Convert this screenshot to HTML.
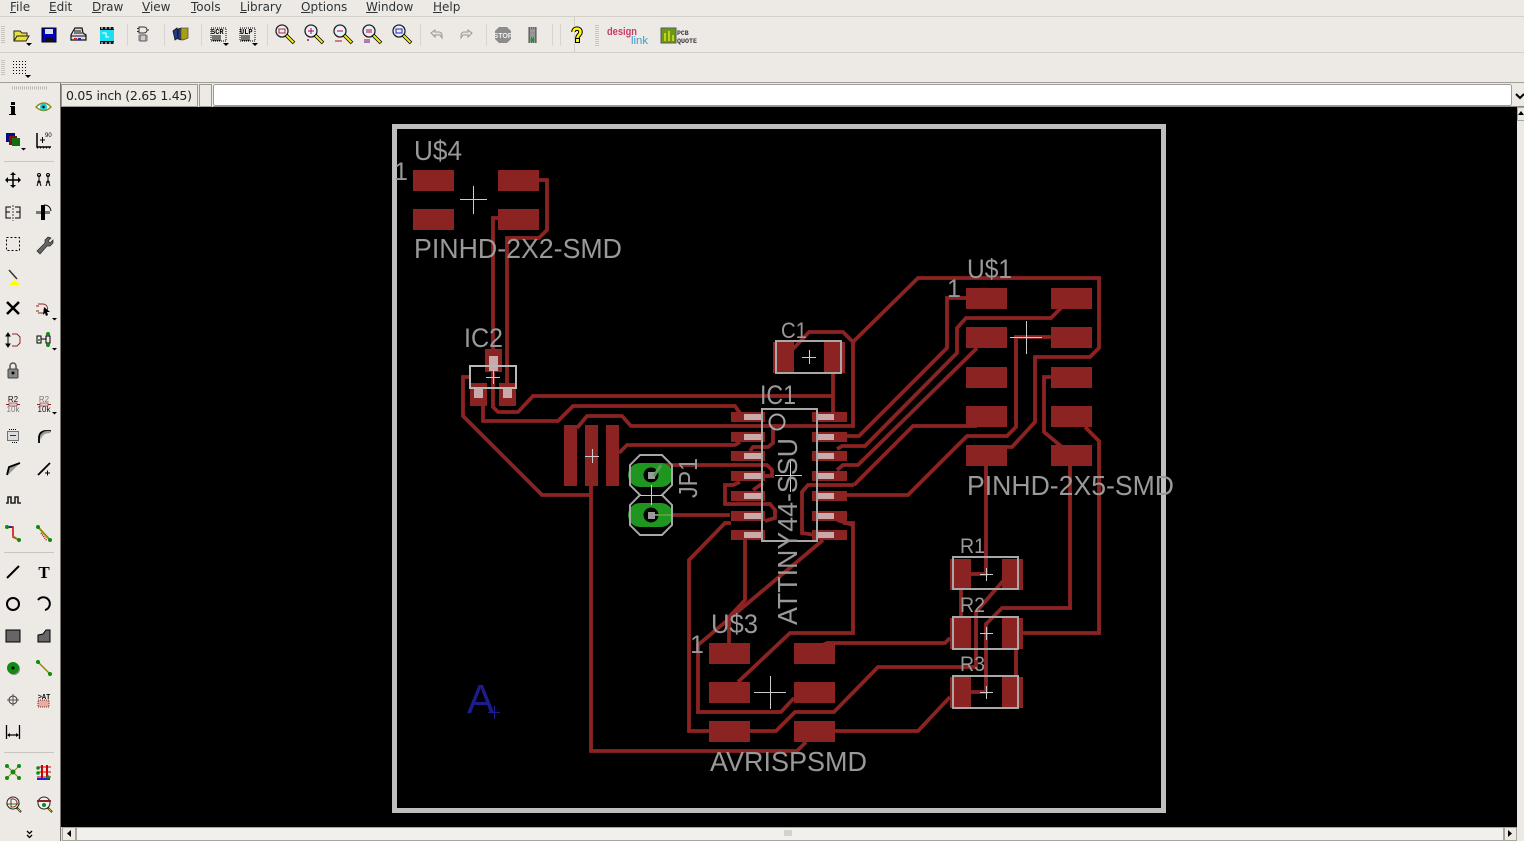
<!DOCTYPE html>
<html><head><meta charset="utf-8"><title>EAGLE Board</title>
<style>
html,body{margin:0;padding:0;width:1524px;height:841px;overflow:hidden;background:#edeae6}
svg{position:absolute;left:0;top:0;display:block}
.m{position:absolute;top:-1px;font:12px/16px "DejaVu Sans","Liberation Sans",sans-serif;color:#2e3436;white-space:nowrap}
.l{font-family:"Liberation Sans",sans-serif;fill:#999}
.t{fill:none;stroke:#8c2323;stroke-width:3.8;stroke-linejoin:miter}
.p{fill:#8c2323}
.g{fill:#c9aaaa}
.x{stroke:#cccccc;stroke-width:1;fill:none}
.o{fill:none;stroke:#a8a8a8;stroke-width:2}
.k{fill:none;stroke:#000;stroke-width:2}
.i{font-family:"Liberation Mono",monospace;font-weight:bold}
</style></head><body>
<svg width="1524" height="841" viewBox="0 0 1524 841" xmlns="http://www.w3.org/2000/svg">
<defs>
<g id="mag"><circle cx="-3" cy="-3" r="6" fill="#e8f0f8" stroke="#222" stroke-width="1.3"/><path d="M1 1L9 9" stroke="#000" stroke-width="3.6"/><path d="M1.500 1.500L8.500 8.500" stroke="#f0e820" stroke-width="2"/></g>
</defs>
<!-- chrome lines -->
<rect x="0" y="16" width="1524" height="1" fill="#d3cfc9"/>
<rect x="0" y="52" width="1524" height="1" fill="#d3cfc9"/>
<rect x="0" y="82" width="1524" height="1" fill="#cfcbc5"/>
<rect x="574" y="17" width="1" height="35" fill="#d3cfc9"/>
<!-- toolbar separators -->
<g fill="#d8d5d0"><rect x="127" y="24" width="1" height="22"/><rect x="164" y="24" width="1" height="22"/><rect x="201" y="24" width="1" height="22"/><rect x="267" y="24" width="1" height="22"/><rect x="420" y="24" width="1" height="22"/><rect x="486" y="24" width="1" height="22"/><rect x="552" y="24" width="1" height="22"/><rect x="560" y="24" width="1" height="22"/></g>
<g fill="#c8c5c0"><path d="M1 26h4v1H1zM1 28h4v1H1zM1 30h4v1H1zM1 32h4v1H1zM1 34h4v1H1zM1 36h4v1H1zM1 38h4v1H1zM1 40h4v1H1zM1 42h4v1H1zM1 60h4v1H1zM1 62h4v1H1zM1 64h4v1H1zM1 66h4v1H1zM1 68h4v1H1zM1 70h4v1H1zM1 72h4v1H1zM1 74h4v1H1zM595 25h4v1h-4zM595 27h4v1h-4zM595 29h4v1h-4zM595 31h4v1h-4zM595 33h4v1h-4zM595 35h4v1h-4zM595 37h4v1h-4zM595 39h4v1h-4zM595 41h4v1h-4zM595 43h4v1h-4zM595 45h4v1h-4z"/></g>
<!-- toolbar icons -->
<path d="M14 31h6l2 2h5v3h2l-3 5H14z" fill="#e8e040" stroke="#222" stroke-width="1"/><path d="M14 41l3-5h12" fill="none" stroke="#222"/>
<path d="M26 43h6l-3 3z" fill="#000"/>
<rect x="42" y="28" width="14" height="14" fill="#0000c0" stroke="#000"/><rect x="45" y="29" width="8" height="5" fill="#e0e0e0"/><rect x="45" y="37" width="8" height="5" fill="#111"/>
<path d="M72 33l3-5h7l1 5 3 2v5H71v-5z" fill="#ddd" stroke="#111" stroke-width="1.200"/><path d="M71 36h15M74 31h7M74 33h8" stroke="#111"/><path d="M74 39h3" stroke="#d02020" stroke-width="2"/><path d="M78 39h3" stroke="#2020d0" stroke-width="2"/>
<rect x="100" y="27" width="14" height="17" fill="#111"/><rect x="100" y="30" width="14" height="11" fill="#18e0f0"/><path d="M101 28h2m2 0h2m2 0h2m2 0h1M101 43h2m2 0h2m2 0h2m2 0h1" stroke="#fff"/><path d="M102 33h4v4h3" stroke="#fff" fill="none"/>
<path d="M139 27h5a3 3 0 0 1 0 6h-5zM137 28.500h2M137 31.500h2M147 30h2" fill="none" stroke="#333"/><rect x="140" y="35" width="6" height="6" fill="#ccc" stroke="#555"/><path d="M138 36h2m-2 2h2m-2 2h2m6-4h2m-2 2h2m-2 2h2" stroke="#777"/>
<path d="M173 31l4-3 1 10-3 2z" fill="#243c86" stroke="#111" stroke-width=".8"/><path d="M178 29l3-1v12l-3-1z" fill="#243c86" stroke="#111" stroke-width=".8"/><path d="M181 28h7v10l-5 2-2-1z" fill="#a8a010" stroke="#554" stroke-width=".8"/>
<g stroke="#000" stroke-dasharray="1 1" fill="none"><path d="M211 28h15v13h-15z"/></g><text x="211" y="34" class="i" font-size="7" fill="#000">SCR</text><path d="M212 36h9M212 38h9M212 40h9" stroke="#000"/><path d="M223 43h6l-3 3z"/>
<g stroke="#000" stroke-dasharray="1 1" fill="none"><path d="M240 28h15v13h-15z"/></g><text x="240" y="34" class="i" font-size="7" fill="#000">ULP</text><path d="M241 36h9M241 38h9M241 40h9" stroke="#000"/><path d="M252 43h6l-3 3z"/>
<use href="#mag" transform="translate(285,34)"/><path d="M279 29h6v4h-6z" fill="none" stroke="#c02030" stroke-width="1"/>
<use href="#mag" transform="translate(314,34)"/><path d="M308 31h6M311 28v6" stroke="#c00050"/><path d="M307 40h2M308 39v2" stroke="#c00050"/>
<use href="#mag" transform="translate(343,34)"/><path d="M337 31h6M335 41h7" stroke="#c00030"/>
<use href="#mag" transform="translate(372,34)"/><path d="M366 30h6M366 32h6" stroke="#c00050"/><path d="M364 40h6" stroke="#c00030"/><path d="M364 42h6" stroke="#2020c0"/>
<use href="#mag" transform="translate(402,34)"/><path d="M396 29h6v4h-6z" fill="none" stroke="#2020c0"/>
<path d="M431 33l4-3v2h4a3 3 0 0 1 3 3v3l-2-3h-5v2z" fill="#e6e4e0" stroke="#9a9894"/>
<path d="M472 33l-4-3v2h-4a3 3 0 0 0-3 3v3l2-3h5v2z" fill="#e6e4e0" stroke="#9a9894"/>
<path d="M499 27h8l4 4v8l-4 4h-8l-4-4v-8z" fill="#8c8c8c"/><text x="503" y="38" text-anchor="middle" font-family="Liberation Sans,sans-serif" font-weight="bold" font-size="7" fill="#eee">STOP</text>
<rect x="528" y="27" width="9" height="16" fill="#666"/><path d="M528 28h9M528 30h9M528 32h9M528 34h9M528 36h9M528 38h9M528 40h9M528 42h9" stroke="#cfcfcf" stroke-dasharray="1 1"/><circle cx="532.500" cy="31" r="2" fill="#999"/><circle cx="532.500" cy="35" r="2" fill="#999"/><circle cx="532.500" cy="40" r="2" fill="#1a9a3a"/>
<path d="M573.500 32c0-4.500 7-4.500 7 0 0 3-3 3-3 6" fill="none" stroke="#000" stroke-width="4.500"/><rect x="575" y="38" width="5" height="5" fill="#000"/>
<path d="M573.500 32c0-4.500 7-4.500 7 0 0 3-3 3-3 6" fill="none" stroke="#ff0" stroke-width="2.500"/><rect x="576" y="39" width="3" height="3" fill="#ff0"/>
<text x="607" y="35" font-family="Liberation Sans,sans-serif" font-size="11" font-weight="bold" fill="#c83a64" textLength="30" lengthAdjust="spacingAndGlyphs">design</text>
<text x="631" y="44" font-family="Liberation Sans,sans-serif" font-size="11" fill="#3a9ac8" textLength="17" lengthAdjust="spacingAndGlyphs">link</text>
<rect x="661" y="28" width="15" height="15" fill="#6a9a10" stroke="#556"/><path d="M665 41v-8M669 41v-10M673 41v-6" stroke="#e8e020" stroke-width="1.500"/>
<text x="677" y="35" class="i" font-size="6.500" fill="#333">PCB</text><text x="677" y="43" class="i" font-size="6.500" fill="#333" textLength="20" lengthAdjust="spacingAndGlyphs">QUOTE</text>
<!-- grid icon -->
<g fill="#000"><path d="M13 61h1v1h-1zM16 61h1v1h-1zM19 61h1v1h-1zM22 61h1v1h-1zM25 61h1v1h-1zM13 64h1v1h-1zM16 64h1v1h-1zM19 64h1v1h-1zM22 64h1v1h-1zM25 64h1v1h-1zM13 67h1v1h-1zM16 67h1v1h-1zM19 67h1v1h-1zM22 67h1v1h-1zM25 67h1v1h-1zM13 70h1v1h-1zM16 70h1v1h-1zM19 70h1v1h-1zM22 70h1v1h-1zM25 70h1v1h-1zM13 73h1v1h-1zM16 73h1v1h-1zM19 73h1v1h-1zM22 73h1v1h-1zM25 73h1v1h-1z"/><path d="M25 75h6l-3 3z"/></g>
<!-- status row -->
<rect x="61.500" y="84.500" width="136" height="22" fill="#edeae6" stroke="#9b9791"/>
<text x="66" y="100" font-family="DejaVu Sans,sans-serif" font-size="12.500" fill="#222" textLength="126">0.05 inch (2.65 1.45)</text>
<rect x="199.500" y="84.500" width="12" height="22" fill="#edeae6" stroke="#9b9791"/>
<rect x="213.500" y="84.500" width="1298" height="21" rx="2" fill="#fff" stroke="#a09c96"/>
<rect x="1512" y="84" width="12" height="22" fill="#edeae6"/>
<path d="M1516 94l4 4 4-4" fill="none" stroke="#000" stroke-width="2"/>
<rect x="0" y="82" width="1524" height="1" fill="#8d8984" opacity=".7"/>
<rect x="213" y="106" width="1311" height="1" fill="#8d8984"/>
<!-- canvas -->
<rect x="61" y="107" width="1456" height="720" fill="#000"/>
<rect x="60" y="83" width="1" height="758" fill="#77736e"/>
<!-- scrollbars -->
<rect x="61" y="827" width="1463" height="14" fill="#e4e1dc"/>
<rect x="62.500" y="827.500" width="13" height="13" fill="#edeae6" stroke="#a8a49e"/>
<path d="M71 830v7l-4-3.500z" fill="#000"/>
<rect x="76.500" y="827.500" width="1427" height="13" fill="#f2f0ec" stroke="#a8a49e"/>
<rect x="1504.500" y="827.500" width="12" height="13" fill="#edeae6" stroke="#a8a49e"/>
<path d="M1508 830v7l4-3.500z" fill="#000"/>
<path d="M785 830v6M787 830v6M789 830v6M791 830v6" stroke="#b8b4ae"/>
<rect x="1517" y="107" width="7" height="734" fill="#edeae6"/>
<path d="M1517.500 107.500h7M1517.500 107.500v13h7" fill="none" stroke="#a8a49e"/>
<path d="M1521 111l-3 4h6z" fill="#000"/>
<!-- traces -->
<g class="t">
<path d="M539 180h8v50l-8 8h-32v145"/>
<path d="M498 218h-5v131"/>
<path d="M493 372v35l5 5h20l15-16h300"/>
<path d="M833 373v39"/>
<path d="M483 406v15h75l15-15h162l7 10"/>
<path d="M469 377h-6v39l79 79h49"/>
<path d="M591 486v265h206l9-9"/>
<path d="M577 428l10-12h35l9 10h222v-84l-10-10h-34l-16 17"/>
<path d="M853 342l65-64h181v70l-9 9h-55v65l-23 25h-15"/>
<path d="M619 453l8-8h108l5-3"/>
<path d="M660 465h107l5 5v6h-12"/>
<path d="M773 426v17l-5 4h-15l-3 4"/>
<path d="M740 482l-7 3h-8v19h45l5 6v8l-10 3"/>
<path d="M753 490l10-7"/>
<path d="M651 515h79"/>
<path d="M731 523h-6l-36 37v171h20"/>
<path d="M745 540v60l-16 17v26"/>
<path d="M823 540L698 645v67h83l13-14"/>
<path d="M843 523h10v110h-63l-52 49"/>
<path d="M847 436h12l88-88v-50h19"/>
<path d="M837 449l5-3h23l92-93v-25l9-10h85l11-11"/>
<path d="M837 470l6-5h15l119-117"/>
<path d="M854 485l59-59h64"/>
<path d="M854 485h-46l-6 7v41l13 2"/>
<path d="M847 495h61l59-59h40l9-9v-90h35"/>
<path d="M837 520l16 5"/>
<path d="M1051 377h-7v55l18 15"/>
<path d="M1085 427l14 14v192h-76"/>
<path d="M1070 466v142h-68l-16 16v68h-15"/>
<path d="M986 466v108h-15"/>
<path d="M961 590v28"/>
<path d="M1003 581l-27 31v55h-98l-44 45h-39l-19 19h-26"/>
<path d="M1016 649v28"/>
<path d="M950 638l-5 5H827l-4 2"/>
<path d="M950 697l-32 34h-83"/>
</g>
<!-- pads -->
<g class="p">
<rect x="413" y="170" width="41" height="21"/><rect x="498" y="170" width="41" height="21"/><rect x="413" y="209" width="41" height="21"/><rect x="498" y="209" width="41" height="21"/>
<rect x="485" y="349" width="17" height="23"/><rect x="470" y="383" width="17" height="23"/><rect x="499" y="383" width="17" height="23"/>
<rect x="564" y="425" width="13" height="61"/><rect x="585" y="425" width="13" height="61"/><rect x="606" y="425" width="13" height="61"/>
<rect x="773" y="342" width="21" height="31"/><rect x="824" y="342" width="21" height="31"/>
<rect x="731" y="412" width="34" height="10"/><rect x="731" y="432" width="34" height="10"/><rect x="731" y="451" width="34" height="10"/><rect x="731" y="471" width="34" height="10"/><rect x="731" y="491" width="34" height="10"/><rect x="731" y="511" width="34" height="10"/><rect x="731" y="530" width="34" height="10"/>
<rect x="812" y="412" width="35" height="10"/><rect x="812" y="432" width="35" height="10"/><rect x="812" y="451" width="35" height="10"/><rect x="812" y="471" width="35" height="10"/><rect x="812" y="491" width="35" height="10"/><rect x="812" y="511" width="35" height="10"/><rect x="812" y="530" width="35" height="10"/>
<rect x="966" y="288" width="41" height="21"/><rect x="1051" y="288" width="41" height="21"/><rect x="966" y="327" width="41" height="21"/><rect x="1051" y="327" width="41" height="21"/><rect x="966" y="367" width="41" height="21"/><rect x="1051" y="367" width="41" height="21"/><rect x="966" y="406" width="41" height="21"/><rect x="1051" y="406" width="41" height="21"/><rect x="966" y="445" width="41" height="21"/><rect x="1051" y="445" width="41" height="21"/>
<rect x="709" y="643" width="41" height="21"/><rect x="794" y="643" width="41" height="21"/><rect x="709" y="682" width="41" height="21"/><rect x="794" y="682" width="41" height="21"/><rect x="709" y="721" width="41" height="21"/><rect x="794" y="721" width="41" height="21"/>
<rect x="950" y="559" width="21" height="31"/><rect x="1002" y="559" width="21" height="31"/><rect x="950" y="618" width="21" height="31"/><rect x="1002" y="618" width="21" height="31"/><rect x="950" y="677" width="21" height="31"/><rect x="1002" y="677" width="21" height="31"/>
</g>
<!-- light pad overlays -->
<g class="g">
<rect x="489" y="356" width="9" height="15"/><rect x="474" y="387" width="9" height="11"/><rect x="503" y="387" width="9" height="11"/>
<rect x="744" y="414" width="18" height="6"/><rect x="744" y="434" width="18" height="6"/><rect x="744" y="453" width="18" height="6"/><rect x="744" y="473" width="18" height="6"/><rect x="744" y="493" width="18" height="6"/><rect x="744" y="513" width="18" height="6"/><rect x="744" y="532" width="18" height="6"/>
<rect x="817" y="414" width="17" height="6"/><rect x="817" y="434" width="17" height="6"/><rect x="817" y="453" width="17" height="6"/><rect x="817" y="473" width="17" height="6"/><rect x="817" y="493" width="17" height="6"/><rect x="817" y="513" width="17" height="6"/><rect x="817" y="532" width="17" height="6"/>
</g>
<!-- JP1 -->
<g fill="#1f961f"><rect x="628" y="463" width="45" height="24" rx="12"/><rect x="628" y="503" width="45" height="24" rx="12"/></g>
<circle cx="651" cy="475" r="7.500" fill="#000"/><circle cx="651" cy="515" r="7.500" fill="#000"/>
<rect x="648" y="472" width="7" height="7" fill="#9a9a9a"/><rect x="648" y="512" width="7" height="7" fill="#9a9a9a"/>
<path d="M654 476l7-11" stroke="#5e9a5e" stroke-width="3" fill="none"/>
<path d="M655 515h18" stroke="#5e9a3a" stroke-width="2" fill="none"/>
<path d="M640 455h22l10 10v20l-10 10 10 10v20l-10 10h-22l-10-10v-20l10-10-10-10v-20z" fill="none" stroke="#a8a8a8" stroke-width="2"/>
<!-- outlines -->
<rect x="394.500" y="126.500" width="769" height="684" fill="none" stroke="#bebebe" stroke-width="5"/>
<rect x="470" y="366" width="46" height="22" class="o" stroke-width="2.500" style="stroke:#b8b8b8"/>
<rect x="776" y="341" width="65" height="32" class="o"/>
<rect x="762" y="409" width="55" height="132" class="o"/>
<circle cx="777" cy="422" r="7.500" class="o"/>
<rect x="953" y="557" width="65" height="32" class="o"/>
<rect x="953" y="617" width="65" height="32" class="o"/>
<rect x="953" y="676" width="65" height="32" class="o"/>
<!-- crosses -->
<path class="x" d="M460 199.500h27M473.500 186v28M493.500 370v14M486 377.500h14M585 456.500h14M592.500 449v14M802 357.500h14M809.500 350v14M640 495.500h22M651.500 485v20M1010 337.500h32M1026.500 321v33M754 692.500h32M770.500 676v33M980 574.500h13M986.500 568v13M980 633.500h13M986.500 627v13M980 692.500h13M986.500 686v13M775 475.500h27M790.500 459v33"/>
<!-- labels -->
<g class="l">
<text x="414" y="160" font-size="28" textLength="48" lengthAdjust="spacingAndGlyphs">U$4</text>
<text x="394" y="180" font-size="25">1</text>
<text x="414" y="258" font-size="28" textLength="208" lengthAdjust="spacingAndGlyphs">PINHD-2X2-SMD</text>
<text x="464" y="347" font-size="27" textLength="39" lengthAdjust="spacingAndGlyphs">IC2</text>
<text x="781" y="338" font-size="22" textLength="26" lengthAdjust="spacingAndGlyphs">C1</text>
<text x="760" y="404" font-size="27" textLength="36" lengthAdjust="spacingAndGlyphs">IC1</text>
<text x="967" y="278" font-size="27" textLength="45" lengthAdjust="spacingAndGlyphs">U$1</text>
<text x="947" y="297" font-size="25">1</text>
<text x="967" y="495" font-size="28" textLength="207" lengthAdjust="spacingAndGlyphs">PINHD-2X5-SMD</text>
<text x="711" y="633" font-size="27" textLength="47" lengthAdjust="spacingAndGlyphs">U$3</text>
<text x="690" y="653" font-size="25">1</text>
<text x="710" y="771" font-size="28" textLength="157" lengthAdjust="spacingAndGlyphs">AVRISPSMD</text>
<text x="960" y="553" font-size="21" textLength="25" lengthAdjust="spacingAndGlyphs">R1</text>
<text x="960" y="612" font-size="21" textLength="25" lengthAdjust="spacingAndGlyphs">R2</text>
<text x="960" y="671" font-size="21" textLength="25" lengthAdjust="spacingAndGlyphs">R3</text>
<text transform="translate(697,498) rotate(-90)" font-size="26" textLength="40" lengthAdjust="spacingAndGlyphs">JP1</text>
<text transform="translate(797,625) rotate(-90)" font-size="28" textLength="187" lengthAdjust="spacingAndGlyphs">ATTINY44-SSU</text>
</g>
<text x="467" y="713" font-family="Liberation Sans,sans-serif" font-size="41" fill="#1c1c8c">A</text>
<path d="M488 712.500h12M494.500 706v13" stroke="#1c1c8c" fill="none"/>
<!-- sidebar -->
<path d="M12 88h36" stroke="#bdbab4" stroke-dasharray="1 1" stroke-width="3"/>
<g fill="#c8c5c0"><rect x="4" y="161" width="50" height="1"/><rect x="4" y="552" width="50" height="1"/><rect x="4" y="752" width="50" height="1"/></g>
<!-- row 107 -->
<rect x="11" y="102" width="4" height="3" fill="#000"/><path d="M10 106h5v8h1v1h-7v-1h2v-7h-1z" fill="#000"/>
<path d="M36 107q8-8 15 0q-7 7-15 0z" fill="#fff" stroke="#8a8a10" stroke-width="1.400"/><circle cx="43.500" cy="107" r="3.500" fill="#18c8d8"/><circle cx="43.500" cy="107" r="1.200" fill="#000"/>
<!-- row 139 -->
<rect x="6" y="133" width="9" height="9" fill="#0a0a80"/><rect x="9" y="136" width="8" height="9" fill="#801010" /><rect x="12" y="138" width="8" height="8" fill="#107010"/><path d="M21 148h5l-2.500 2.500z"/>
<path d="M37 133v14h14" fill="none" stroke="#000" stroke-width="1.500"/><path d="M40 140h5M42.500 137v6" stroke="#000"/><path d="M37 148h14" stroke="#000" stroke-dasharray="1 2"/><text x="45" y="137" font-size="6" font-family="Liberation Sans,sans-serif">90</text>
<!-- row 180 -->
<path d="M13 173v14M6 180h14" stroke="#000" stroke-width="1.500"/><path d="M13 172l-3 3h6zM13 188l-3-3h6zM5 180l3-3v6zM21 180l-3-3v6z" fill="#000"/>
<path d="M39 175v5m-2 6l2-6 2 6m-4-4h4M48 175v5m-2 6l2-6 2 6m-4-4h4" stroke="#000" fill="none"/><circle cx="39" cy="175" r="1.500" fill="none" stroke="#000"/><circle cx="48" cy="175" r="1.500" fill="none" stroke="#000"/>
<!-- row 212 -->
<path d="M11 207H6v11h5M6 212h4M15 207h5v11h-5M20 212h-4" fill="none" stroke="#000"/><path d="M13 205v16" stroke="#444" stroke-dasharray="2 1"/>
<rect x="36" y="211" width="14" height="3" fill="#777"/><rect x="41" y="205" width="4" height="15" fill="#000"/><path d="M44 205q6 0 7 6" fill="none" stroke="#000"/>
<!-- row 244 -->
<rect x="6.500" y="237.500" width="13" height="13" fill="none" stroke="#000" stroke-dasharray="2 2"/>
<path d="M37 251l8-8 0-3 3-3 3 1-3 3 2 2 3-3 0 3-3 3-3 0-7 8z" fill="#666" stroke="#222" stroke-width=".7"/>
<!-- row 276 -->
<path d="M9 270l8 9" stroke="#333" stroke-width="1.500"/><path d="M9 285l5-5 6 4v1z" fill="#ff0"/>
<!-- row 308 -->
<path d="M7 302l12 12M19 302L7 314" stroke="#000" stroke-width="2.500"/>
<path d="M38 304h5a3 3 0 0 1 0 9h-5M36 306h3M36 311h3" fill="none" stroke="#8c2323"/><path d="M44 307l6 5-3 0 1 3-2 1-1-3-2 2z" fill="#000"/><path d="M52 318h5l-2.500 2.500z"/>
<!-- row 340 -->
<path d="M8 334v12M6 336l2-3 2 3zM6 344l2 3 2-3z" stroke="#000" fill="#000"/><path d="M12 334h5l3 3v6l-3 3h-5" fill="none" stroke="#8c2323"/>
<path d="M37 336h4v7h-4zM46 336h4v7h-4z" fill="none" stroke="#000"/><path d="M41 339h5" stroke="#000"/><circle cx="48" cy="334" r="2" fill="#118a11"/><circle cx="48" cy="345" r="2" fill="#118a11"/><circle cx="39" cy="340" r="1" fill="#118a11"/><path d="M52 348h5l-2.500 2.500z"/>
<!-- row 372 -->
<rect x="8" y="369" width="10" height="9" rx="1" fill="#888" stroke="#444"/><path d="M10 369v-3a3 3 0 0 1 6 0v3" fill="none" stroke="#555" stroke-width="1.500"/><circle cx="13" cy="373" r="1.500" fill="#000"/>
<!-- row 404 -->
<text x="13" y="402" text-anchor="middle" font-size="8" font-family="Liberation Sans,sans-serif" fill="#111">R2</text><path d="M6 404.500h14" stroke="#8c2323"/><rect x="9" y="403" width="8" height="3" fill="#ecc" stroke="#8c2323" stroke-width=".6"/><text x="13" y="412" text-anchor="middle" font-size="8" font-family="Liberation Sans,sans-serif" fill="#777">10k</text>
<text x="44" y="402" text-anchor="middle" font-size="8" font-family="Liberation Sans,sans-serif" fill="#777">R2</text><path d="M37 404.500h14" stroke="#8c2323"/><rect x="40" y="403" width="8" height="3" fill="#ecc" stroke="#8c2323" stroke-width=".6"/><text x="44" y="412" text-anchor="middle" font-size="8" font-family="Liberation Sans,sans-serif" fill="#111">10k</text><path d="M52 412h5l-2.500 2.500z"/>
<!-- row 436 -->
<rect x="7.500" y="431.500" width="11" height="9" fill="#ddd" stroke="#000" stroke-dasharray="1 1"/><path d="M9 429.500h8M12 442.500h5" stroke="#000" stroke-dasharray="1 1"/><path d="M10 435.500h6" stroke="#333"/>
<path d="M39 443v-5q0-6 6-7h6" fill="none" stroke="#000" stroke-width="1.800"/><path d="M40 437q1-5 6-6h5l-1 2q-8 0-9 7z" fill="#999"/>
<!-- row 468 -->
<path d="M7 475l2-8 11-4-12 12z" fill="#999"/><path d="M7 475l2-8 11-4" fill="none" stroke="#000" stroke-width="1.800"/>
<path d="M38 475l12-12" stroke="#000" stroke-width="1.800"/><path d="M45 473h5M47.500 470.500v5" stroke="#000"/>
<!-- row 500 -->
<path d="M6 503h2v-6h3v6h4v-6h3v6h3" fill="none" stroke="#222" stroke-width="1.600"/>
<!-- row 532 -->
<path d="M7 527h6v10l6 3" fill="none" stroke="#c00" stroke-width="1.500"/><path d="M7 527h5" stroke="#2020e0" stroke-width="2"/><path d="M13 536l6 4" stroke="#8a8a10" stroke-width="1.500"/><circle cx="7" cy="527" r="2" fill="#118a11"/><circle cx="19" cy="540" r="2" fill="#118a11"/>
<path d="M38 527l12 13" stroke="#8a8a10" stroke-width="2"/><path d="M41 533l6 8" stroke="#c00" stroke-dasharray="1 1" stroke-width="1.500"/><circle cx="38" cy="527" r="2" fill="#118a11"/><circle cx="50" cy="540" r="2" fill="#118a11"/>
<!-- row 572 -->
<path d="M7 578l12-12" stroke="#000" stroke-width="2"/>
<text x="44" y="578" text-anchor="middle" font-family="Liberation Serif,serif" font-weight="bold" font-size="17" fill="#000">T</text>
<!-- row 604 -->
<circle cx="13" cy="604" r="6" fill="none" stroke="#000" stroke-width="2"/>
<path d="M38 600a6.500 6.500 0 1 1 7 10" fill="none" stroke="#000" stroke-width="2"/>
<!-- row 636 -->
<rect x="6" y="630" width="14" height="12" fill="#666" stroke="#000"/>
<path d="M38 642v-7l5-1 3-4h4v12z" fill="#666" stroke="#000"/>
<!-- row 668 -->
<circle cx="14" cy="669" r="6" fill="#888"/><circle cx="13" cy="668" r="6" fill="#118a11"/><circle cx="13" cy="668" r="1.500" fill="#000"/>
<path d="M38 662l12 12" stroke="#8a8a10" stroke-width="1.500"/><circle cx="38" cy="662" r="2" fill="#118a11"/><circle cx="50" cy="674" r="2" fill="#118a11"/>
<!-- row 700 -->
<circle cx="13" cy="700" r="4" fill="none" stroke="#333"/><path d="M7 700h12M13 694v12" stroke="#555"/>
<text x="44" y="699" text-anchor="middle" class="i" font-size="7" fill="#111">&gt;AT</text><rect x="38" y="700" width="11" height="7" fill="#e0b0a0" stroke="#8c2323" stroke-dasharray="1 1"/>
<!-- row 732 -->
<path d="M6.500 725v14M19.500 725v14M8 735h10" stroke="#000" stroke-width="1.300"/><path d="M7 735l3-2v4zM19 735l-3-2v4z"/>
<!-- row 772 -->
<path d="M7 766l12 12M19 766L7 778" stroke="#8a8a10"/><circle cx="7" cy="766" r="2" fill="#118a11"/><circle cx="19" cy="766" r="2" fill="#118a11"/><circle cx="7" cy="778" r="2" fill="#118a11"/><circle cx="19" cy="778" r="2" fill="#118a11"/><circle cx="13" cy="772" r="2.500" fill="#118a11"/>
<path d="M37 767h14M37 772h14M37 777h14" stroke="#c00" stroke-width="1"/><path d="M42 765v14M47 765v14" stroke="#c00" stroke-width="2"/><path d="M37 779h13" stroke="#2020e0" stroke-width="2"/><circle cx="38" cy="768" r="1.800" fill="#118a11"/><circle cx="38" cy="773" r="1.800" fill="#118a11"/><circle cx="48" cy="777" r="1.800" fill="#118a11"/>
<!-- row 804 -->
<circle cx="13" cy="803" r="6" fill="#f0f0f0" stroke="#222"/><path d="M6 804h14" stroke="#118a11"/><path d="M11 799h2a4 4 0 0 1 0 8h-2z" fill="none" stroke="#8c2323"/><path d="M17 808l4 4" stroke="#000" stroke-width="2"/><path d="M17.500 808.500l3 3" stroke="#e8e020"/>
<circle cx="44" cy="803" r="6" fill="#f0f0f0" stroke="#222"/><path d="M37 801h14" stroke="#8c2323" stroke-width="2"/><circle cx="44" cy="805" r="2" fill="#118a11"/><path d="M48 808l4 4" stroke="#000" stroke-width="2"/><path d="M48.500 808.500l3 3" stroke="#e8e020"/>
<!-- chevrons -->
<path d="M27 831l2.500 2.500 2.500-2.500M27 835l2.500 2.500 2.500-2.500" fill="none" stroke="#000" stroke-width="1.300"/>
</svg>
<span class="m" style="left:10px"><u>F</u>ile</span>
<span class="m" style="left:49px"><u>E</u>dit</span>
<span class="m" style="left:92px"><u>D</u>raw</span>
<span class="m" style="left:142px"><u>V</u>iew</span>
<span class="m" style="left:191px"><u>T</u>ools</span>
<span class="m" style="left:240px"><u>L</u>ibrary</span>
<span class="m" style="left:301px"><u>O</u>ptions</span>
<span class="m" style="left:366px"><u>W</u>indow</span>
<span class="m" style="left:433px"><u>H</u>elp</span>
</body></html>
